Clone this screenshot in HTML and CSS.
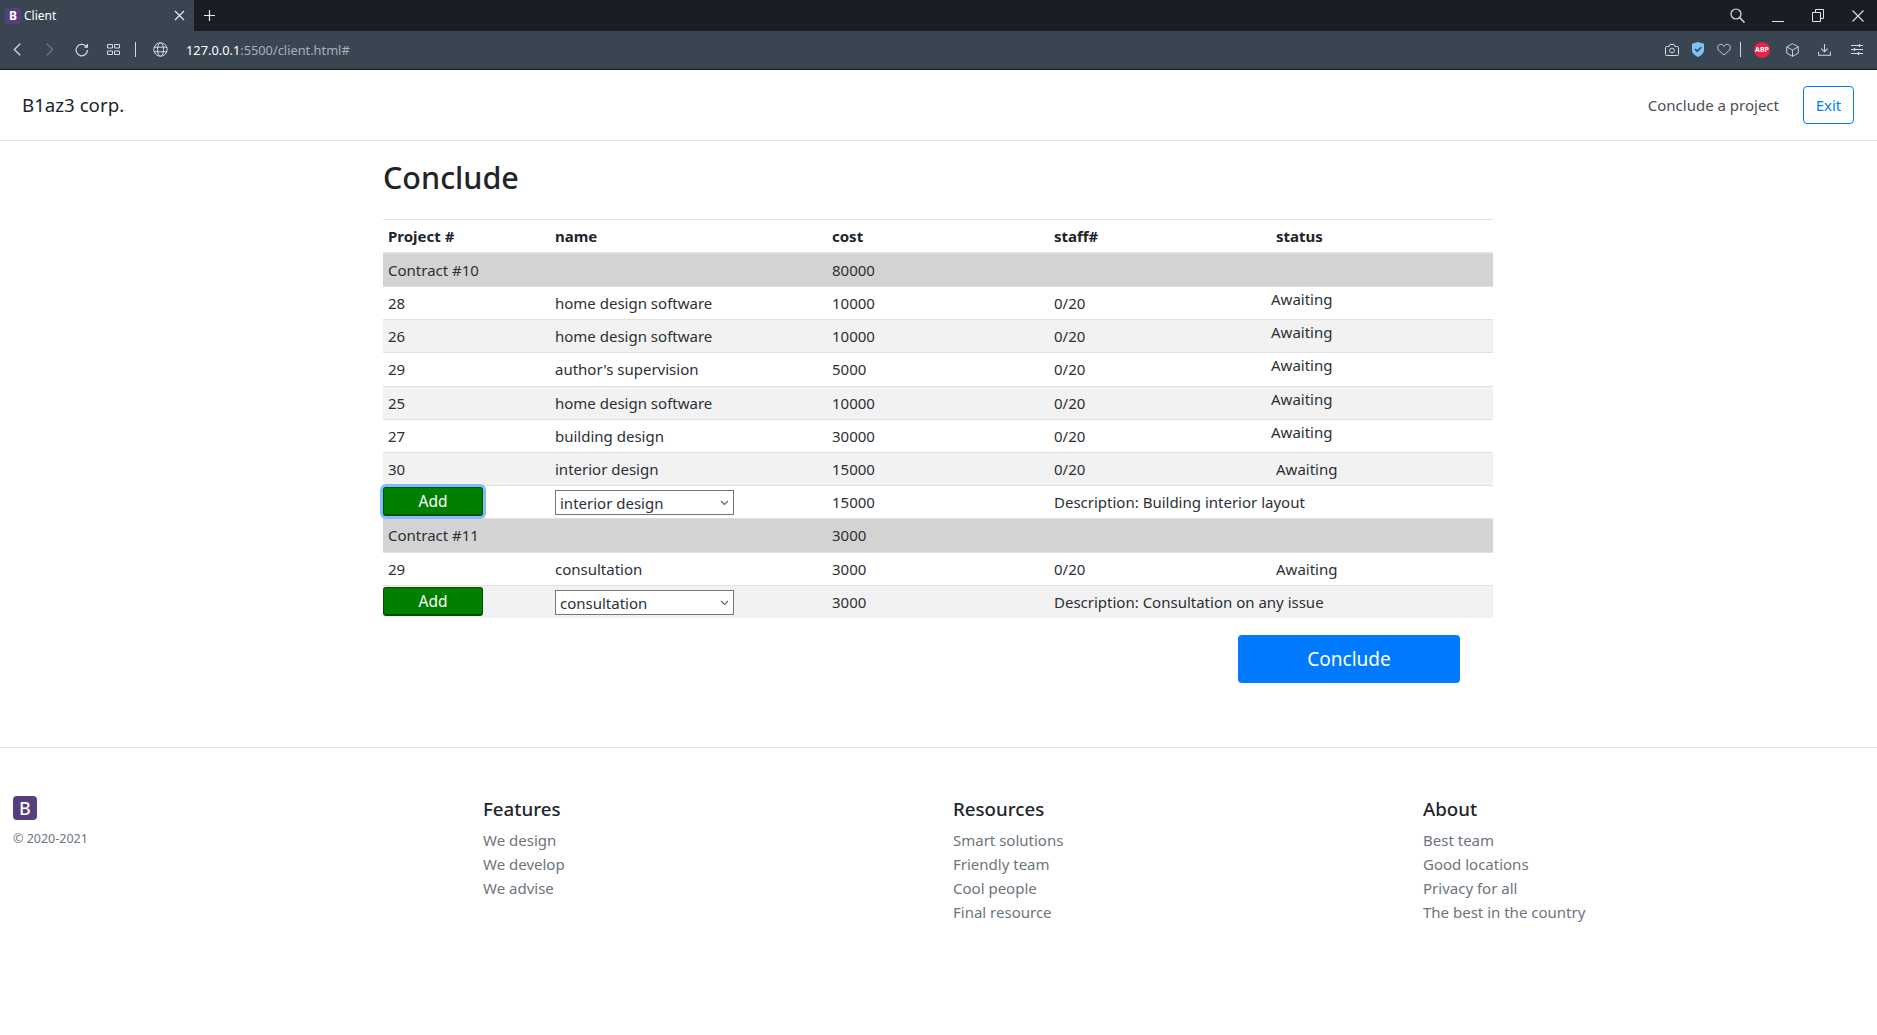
FILE: index.html
```html
<!DOCTYPE html>
<html lang="en">
<head>
    <meta charset="UTF-8">
    <meta name="viewport" content="width=device-width, initial-scale=1.0">
    <title>Client</title>
    <link rel="stylesheet" href="styles.css">
</head>
<body>
    <div class="tabbar">
        <div class="tab">
            <span class="tab-logo">B</span>
            <span class="tab-title">Client</span>
            <svg class="tab-close" width="11" height="11" viewBox="0 0 11 11"><path d="M1 1l9 9M10 1l-9 9" stroke="#e8eaed" stroke-width="1.2" fill="none"/></svg>
        </div>
        <svg class="tab-new" width="11" height="11" viewBox="0 0 11 11"><path d="M5.500 0v11M0 5.500h11" stroke="#e8eaed" stroke-width="1.2" fill="none"/></svg>
        <div class="window-btns">
            <svg width="15" height="15" viewBox="0 0 15 15"><circle cx="6" cy="6" r="5" stroke="#dfe3e7" stroke-width="1.2" fill="none"/><path d="M9.500 9.500l5 5" stroke="#dfe3e7" stroke-width="1.4"/></svg>
            <svg class="win-min" width="12" height="13" viewBox="0 0 12 13"><path d="M0 12.500h12" stroke="#dfe3e7" stroke-width="1"/></svg>
            <svg class="win-max" width="12" height="13" viewBox="0 0 12 13"><path d="M.5 3.500h8v9h-8zM3.500 3.500v-3h8v9h-3" stroke="#dfe3e7" stroke-width="1" fill="none"/></svg>
            <svg class="win-close" width="12" height="12" viewBox="0 0 12 12"><path d="M.5.5l11 11M11.500.5l-11 11" stroke="#dfe3e7" stroke-width="1.100" fill="none"/></svg>
        </div>
    </div>
    <div class="toolbar">
        <div class="tool-left">
            <svg width="8" height="13" viewBox="0 0 8 13"><path d="M7.300.7L1.300 6.500l6 5.800" stroke="#d5d9dd" stroke-width="1.3" fill="none"/></svg>
            <svg class="tool-next" width="8" height="13" viewBox="0 0 8 13"><path d="M.7.7l6 5.800-6 5.800" stroke="#6d7782" stroke-width="1.3" fill="none"/></svg>
            <svg class="tool-reload" width="14" height="14" viewBox="0 0 14 14"><path d="M12.500 7a5.700 5.700 0 1 1-1.700-4" stroke="#d5d9dd" stroke-width="1.2" fill="none"/><path d="M13 .5v4.200H8.800z" fill="#d5d9dd"/></svg>
            <svg class="tool-grid" width="13" height="11" viewBox="0 0 13 11"><path d="M.5.500h5v3.500h-5zM7.500.500h5v3.500h-5zM.5 7h5v3.500h-5zM7.500 7h5v3.500h-5z" stroke="#d5d9dd" stroke-width="1" fill="none"/></svg>
            <span class="tool-sep"></span>
            <svg class="tool-globe" width="15" height="15" viewBox="0 0 15 15"><g stroke="#d5d9dd" stroke-width="1" fill="none"><circle cx="7.500" cy="7.500" r="6.700"/><ellipse cx="7.500" cy="7.500" rx="3" ry="6.700"/><path d="M1 5.200h13M1 9.800h13"/></g></svg>
            <span class="url"><b>127.0.0.1</b>:5500/client.html#</span>
        </div>
        <div class="tool-right">
            <svg class="ext-camera" width="14" height="12" viewBox="0 0 14 12"><path d="M1.500 2.500h2.500l1-2h4l1 2h2.500a1 1 0 0 1 1 1v7a1 1 0 0 1-1 1h-11a1 1 0 0 1-1-1v-7a1 1 0 0 1 1-1z" stroke="#d5d9dd" fill="none"/><circle cx="7" cy="6.500" r="2.300" stroke="#d5d9dd" fill="none"/></svg>
            <svg class="ext-shield" width="12" height="15" viewBox="0 0 12 15"><path d="M6 0l6 1.800v6c0 3.500-3 6-6 7.200-3-1.200-6-3.700-6-7.200v-6z" fill="#7cc4f8"/><path d="M3 7l2.200 2.200 4-4" stroke="#2b3a4a" stroke-width="1.600" fill="none"/></svg>
            <svg class="ext-heart" width="14" height="13" viewBox="0 0 15 13"><path d="M7.500 12.300C3 8.800.7 6.800.7 4.200.7 2.300 2.200 1 3.900 1c1.500 0 2.800.8 3.600 2.200C8.300 1.800 9.600 1 11.100 1c1.700 0 3.200 1.300 3.200 3.200 0 2.600-2.300 4.600-6.800 8.100z" stroke="#d5d9dd" fill="none"/></svg>
            <span class="tool-sep ext-sep"></span>
            <span class="abp">ABP</span>
            <svg class="ext-cube" width="13" height="14" viewBox="0 0 14 15"><path d="M7 .7l6.200 3.400v6.800L7 14.300.8 10.900V4.100zM.8 4.100L7 7.500l6.200-3.400M7 7.500v6.800" stroke="#d5d9dd" fill="none"/></svg>
            <svg class="ext-down" width="13" height="13" viewBox="0 0 14 14"><path d="M7 1v8.500M3.500 6L7 9.500 10.500 6M.7 9.500v3.800h12.600V9.500" stroke="#d5d9dd" stroke-width="1.100" fill="none"/></svg>
            <svg class="ext-menu" width="12" height="11" viewBox="0 0 12 11"><path d="M0 1.500h12M0 5.500h12M0 9.500h12" stroke="#d5d9dd"/><path d="M8.500 0v3M3.500 4v3M7.500 8v3" stroke="#d5d9dd" stroke-width="1.300"/></svg>
        </div>
    </div>

    <nav class="navbar">
        <a class="brand" href="#">B1az3 corp.</a>
        <div class="nav-right">
            <a class="nav-link" href="#">Conclude a project</a>
            <a class="btn-exit" href="#">Exit</a>
        </div>
    </nav>

    <main class="content">
        <h1 class="title">Conclude</h1>
        <table class="projects">
            <colgroup>
                <col class="col-num"><col class="col-name"><col class="col-rest"><col class="col-rest"><col class="col-rest">
            </colgroup>
            <thead>
                <tr><th>Project #</th><th>name</th><th>cost</th><th>staff#</th><th>status</th></tr>
            </thead>
            <tbody>
                <tr class="contract"><td>Contract #10</td><td></td><td>80000</td><td></td><td></td></tr>
                <tr><td>28</td><td>home design software</td><td>10000</td><td>0/20</td><td><span class="raised">Awaiting</span></td></tr>
                <tr class="alt"><td>26</td><td>home design software</td><td>10000</td><td>0/20</td><td><span class="raised">Awaiting</span></td></tr>
                <tr><td>29</td><td>author's supervision</td><td>5000</td><td>0/20</td><td><span class="raised">Awaiting</span></td></tr>
                <tr class="alt"><td>25</td><td>home design software</td><td>10000</td><td>0/20</td><td><span class="raised">Awaiting</span></td></tr>
                <tr><td>27</td><td>building design</td><td>30000</td><td>0/20</td><td><span class="raised">Awaiting</span></td></tr>
                <tr class="alt"><td>30</td><td>interior design</td><td>15000</td><td>0/20</td><td>Awaiting</td></tr>
                <tr class="add-row">
                    <td><button class="btn-add focused">Add</button></td>
                    <td><div class="fake-select">interior design<svg width="9" height="6" viewBox="0 0 9 6"><path d="M1 1l3.500 3.500L8 1" stroke="#666" stroke-width="1.200" fill="none"/></svg></div></td>
                    <td>15000</td>
                    <td colspan="2">Description: Building interior layout</td>
                </tr>
                <tr class="contract"><td>Contract #11</td><td></td><td>3000</td><td></td><td></td></tr>
                <tr><td>29</td><td>consultation</td><td>3000</td><td>0/20</td><td>Awaiting</td></tr>
                <tr class="alt add-row">
                    <td><button class="btn-add">Add</button></td>
                    <td><div class="fake-select">consultation<svg width="9" height="6" viewBox="0 0 9 6"><path d="M1 1l3.500 3.500L8 1" stroke="#666" stroke-width="1.200" fill="none"/></svg></div></td>
                    <td>3000</td>
                    <td colspan="2">Description: Consultation on any issue</td>
                </tr>
            </tbody>
        </table>
        <div class="actions">
            <button class="btn-conclude">Conclude</button>
        </div>
    </main>

    <footer class="footer">
        <div class="foot-col">
            <span class="foot-logo">B</span>
            <small class="copy">© 2020-2021</small>
        </div>
        <div class="foot-col">
            <h5>Features</h5>
            <ul>
                <li><a href="#">We design</a></li>
                <li><a href="#">We develop</a></li>
                <li><a href="#">We advise</a></li>
            </ul>
        </div>
        <div class="foot-col">
            <h5>Resources</h5>
            <ul>
                <li><a href="#">Smart solutions</a></li>
                <li><a href="#">Friendly team</a></li>
                <li><a href="#">Cool people</a></li>
                <li><a href="#">Final resource</a></li>
            </ul>
        </div>
        <div class="foot-col">
            <h5>About</h5>
            <ul>
                <li><a href="#">Best team</a></li>
                <li><a href="#">Good locations</a></li>
                <li><a href="#">Privacy for all</a></li>
                <li><a href="#">The best in the country</a></li>
            </ul>
        </div>
    </footer>
</body>
</html>
```
FILE: styles.css
```css
* {
    box-sizing: border-box;
}
body {
    margin: 0;
    font-family: "Noto Sans", "Open Sans", sans-serif;
    font-size: 15px;
    line-height: 24px;
    color: #2b3035;
    background: #fff;
}
a {
    text-decoration: none;
}

/* browser chrome */
.tabbar {
    display: flex;
    align-items: center;
    height: 31px;
    background: #1a1e24;
}
.tab {
    display: flex;
    align-items: center;
    width: 194px;
    height: 31px;
    padding: 0 9px 0 5px;
    background: #3a4552;
}
.tab-logo {
    display: flex;
    align-items: center;
    justify-content: center;
    width: 16px;
    height: 16px;
    border-radius: 3px;
    background: #563d7c;
    color: #fff;
    font-size: 12px;
    font-weight: 700;
}
.tab-title {
    margin-left: 3px;
    color: #fff;
    font-size: 12px;
}
.tab-close {
    margin-left: auto;
}
.tab-new {
    margin-left: 10px;
}
.window-btns {
    display: flex;
    align-items: center;
    margin-left: auto;
    padding-right: 13px;
}
.win-min {
    margin-left: 27px;
}
.win-max {
    margin-left: 28px;
}
.win-close {
    margin-left: 28px;
}
.toolbar {
    display: flex;
    align-items: center;
    justify-content: space-between;
    height: 39px;
    padding: 0 14px 1px 13px;
    background: #3a4552;
    border-bottom: 1px solid #14171b;
}
.tool-left,
.tool-right {
    display: flex;
    align-items: center;
}
.tool-next {
    margin-left: 25px;
}
.tool-reload {
    margin-left: 21px;
}
.tool-grid {
    margin-left: 18px;
}
.tool-left .tool-sep {
    margin-left: 15px;
}
.tool-globe {
    margin-left: 17px;
}
.tool-sep {
    width: 1px;
    height: 15px;
    background: #d5d9dd;
}
.url {
    margin-left: 18px;
    color: #a9b0b8;
    font-size: 12.800px;
}
.url b {
    color: #fff;
    font-weight: 400;
}
.ext-shield {
    margin-left: 13px;
}
.ext-heart {
    margin-left: 13px;
}
.ext-sep {
    margin-left: 9px;
}
.abp {
    display: flex;
    align-items: center;
    justify-content: center;
    width: 16px;
    height: 16px;
    margin-left: 13px;
    border-radius: 50%;
    background: #e8224c;
    color: #fff;
    font-size: 7px;
    font-weight: 700;
}
.ext-cube {
    margin-left: 16px;
}
.ext-down {
    margin-left: 19px;
}
.ext-menu {
    margin-left: 20px;
}

/* page */
.navbar {
    display: flex;
    align-items: center;
    justify-content: space-between;
    height: 71px;
    padding: 0 23px 0 22px;
    border-bottom: 1px solid #dee2e6;
}
.brand {
    color: #212529;
    font-size: 18.700px;
}
.nav-right {
    display: flex;
    align-items: center;
}
.nav-link {
    color: #495057;
    margin-right: 24px;
}
.btn-exit {
    width: 51px;
    padding: 6px 0;
    border: 1px solid #007bff;
    border-radius: 4px;
    color: #007bff;
    text-align: center;
}
.content {
    width: 1110px;
    height: 606px;
    margin-left: 383px;
    padding-top: 15px;
}
.title {
    margin: 0 0 21px;
    font-size: 30.500px;
    font-weight: 500;
    line-height: 42px;
    color: #212529;
}
.projects {
    width: 100%;
    border-collapse: collapse;
    table-layout: fixed;
}
.col-num {
    width: 167px;
}
.col-name {
    width: 277px;
}
.col-rest {
    width: 222px;
}
.projects th,
.projects td {
    height: 33.200px;
    padding: 4px 5px;
    border-top: 1px solid #dee2e6;
    text-align: left;
    vertical-align: middle;
}
.projects th {
    font-weight: 700;
    color: #212529;
    border-bottom: 2px solid #dee2e6;
}
.contract td {
    background: #d3d3d3;
}
.alt td {
    background: #f2f2f2;
}
.raised {
    display: block;
    margin: -8px 0 0 -5px;
}
.add-row td {
    padding-top: 0;
    padding-bottom: 0;
}
.add-row td:first-child {
    padding: 1px 0 0;
    vertical-align: top;
}
.btn-add {
    display: block;
    position: relative;
    width: 100px;
    height: 29px;
    padding: 0;
    border: 1px solid #004d00;
    border-bottom-width: 2px;
    border-radius: 3px;
    background: #008000;
    color: #fff;
    font: inherit;
    font-size: 15.500px;
}
.btn-add.focused {
    box-shadow: 0 0 0 3px #80bdff;
}
.fake-select {
    display: flex;
    align-items: center;
    justify-content: space-between;
    width: 179px;
    height: 25px;
    margin-top: 1px;
    padding: 1px 4px;
    border: 1px solid #767676;
    background: #fff;
}
.actions {
    display: flex;
    justify-content: flex-end;
    margin-top: 17px;
    padding-right: 33px;
}
.btn-conclude {
    width: 222px;
    height: 48px;
    border: 0;
    border-radius: 4px;
    background: #007bff;
    color: #fff;
    font: inherit;
    font-size: 19px;
}

/* footer */
.footer {
    display: grid;
    grid-template-columns: repeat(4, 470px);
    padding: 48px 13px 0;
    height: 288px;
    border-top: 1px solid #dee2e6;
}
.foot-logo {
    display: flex;
    align-items: center;
    justify-content: center;
    width: 24px;
    height: 24px;
    border-radius: 4px;
    background: #563d7c;
    color: #fff;
    font-size: 18px;
    font-weight: 500;
}
.copy {
    display: block;
    margin-top: 7px;
    color: #6c757d;
    font-size: 12.500px;
}
.footer h5 {
    margin: 1px 0 7px;
    font-size: 18.700px;
    font-weight: 500;
    line-height: 24px;
    color: #212529;
}
.footer ul {
    margin: 0;
    padding: 0;
    list-style: none;
}
.footer a {
    color: #6c757d;
}
```
